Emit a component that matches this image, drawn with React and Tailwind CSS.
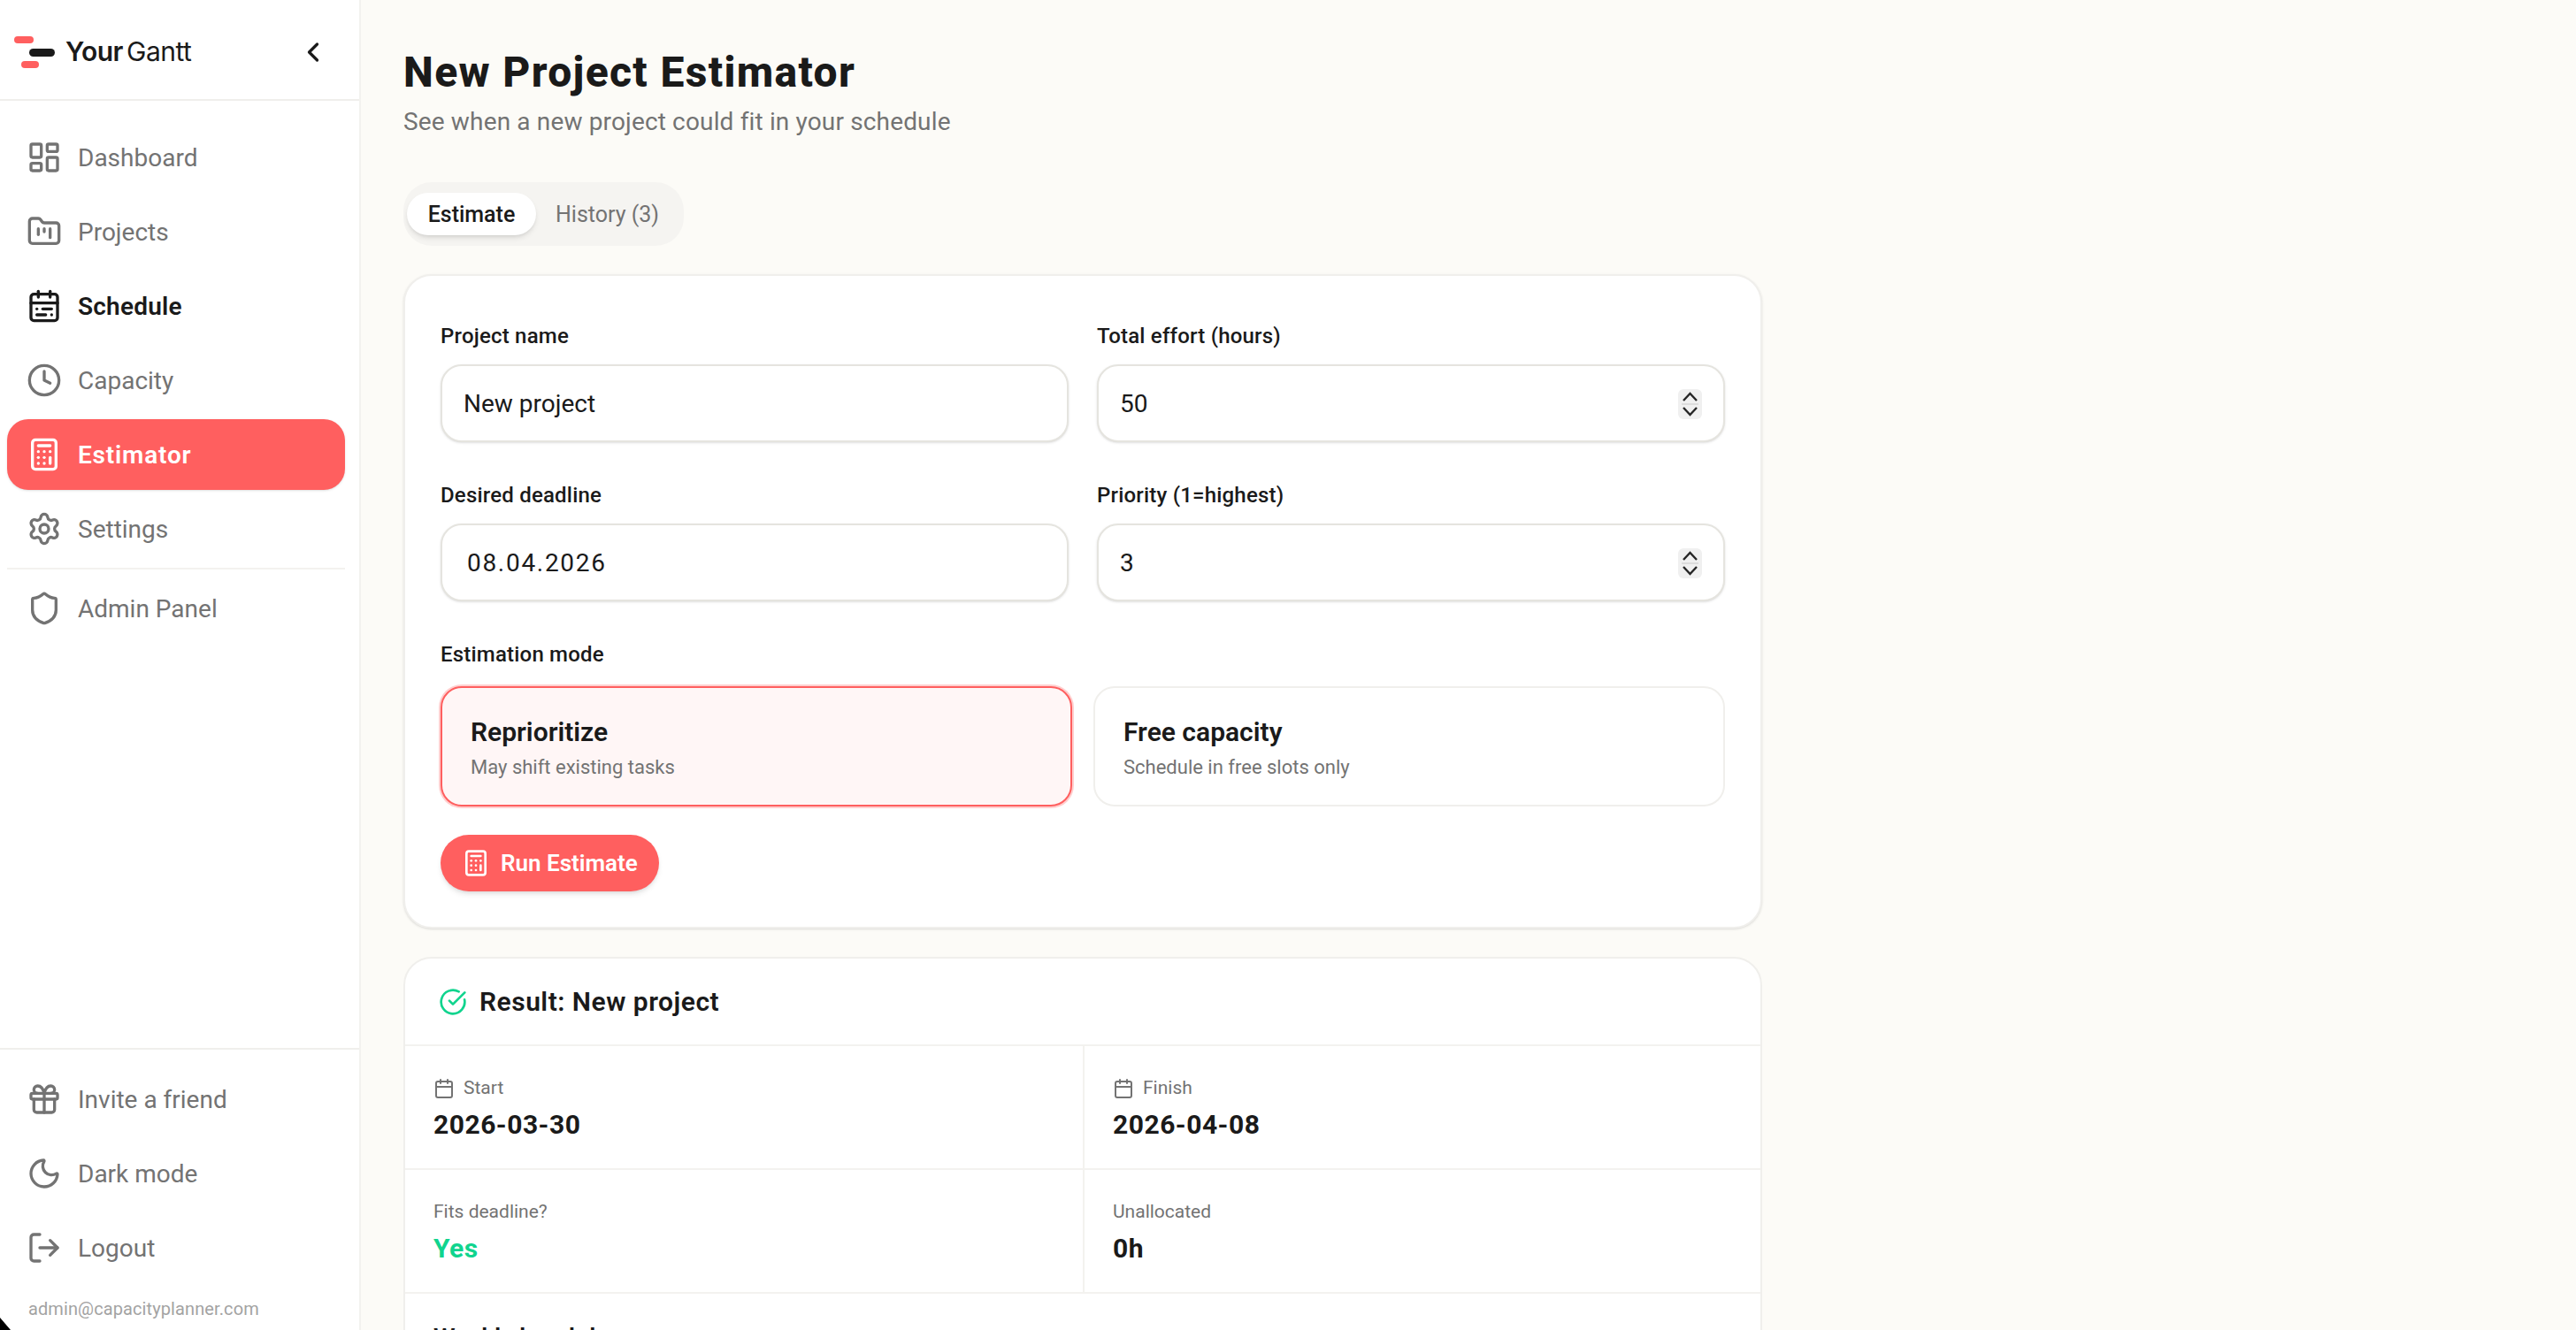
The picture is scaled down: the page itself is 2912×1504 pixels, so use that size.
import {
  LayoutDashboard,
  FolderKanban,
  CalendarRange,
  Clock,
  Calculator,
  Settings,
  Shield,
  Gift,
  Moon,
  LogOut,
  ChevronLeft,
  CircleCheckBig,
  Calendar,
} from "lucide-react";

const navItems = [
  { label: "Dashboard", icon: LayoutDashboard },
  { label: "Projects", icon: FolderKanban },
  { label: "Schedule", icon: CalendarRange, strong: true },
  { label: "Capacity", icon: Clock },
  { label: "Estimator", icon: Calculator, active: true },
  { label: "Settings", icon: Settings },
];

const footerItems = [
  { label: "Invite a friend", icon: Gift },
  { label: "Dark mode", icon: Moon },
  { label: "Logout", icon: LogOut },
];

const NavItem = ({ item }) => {
  const Icon = item.icon;
  let tone = "text-[#737373] font-normal";
  if (item.strong) tone = "text-[#1a1a1a] font-semibold tracking-[0.2px]";
  if (item.active) tone = "bg-[#ff5f5f] text-white font-semibold shadow-sm tracking-[0.8px]";
  return (
    <a className={`flex h-[80px] items-center gap-[18px] rounded-[24px] px-[22px] text-[28px] ${tone}`}>
      <Icon size={40} strokeWidth={2} className="shrink-0" />
      <span className="pt-[2px]">{item.label}</span>
    </a>
  );
};

const Spinner = () => (
  <svg width="27" height="34" viewBox="0 0 27 34" fill="none" className="shrink-0 rounded-[6px] bg-[#f0f0f0]">
    <path d="M6 13 L13.5 5 L21 13" stroke="#262626" strokeWidth="2.4" />
    <path d="M4 17 H23" stroke="#dcdcdc" strokeWidth="2" />
    <path d="M6 21 L13.5 29 L21 21" stroke="#262626" strokeWidth="2.4" />
  </svg>
);

const Field = ({ label, value, spinner, date }) => (
  <div>
    <label className="mb-[12px] block text-[24px] leading-[40px] font-medium tracking-[0.2px] text-[#1a1a1a]">
      {label}
    </label>
    <div className="flex h-[88px] items-center rounded-[24px] border-2 border-[#e5e4df] bg-white px-[24px] pt-[2px] shadow-sm">
      <input
        readOnly
        value={value}
        className={`w-full bg-transparent text-[28px] text-[#1a1a1a] outline-none ${date ? "pl-[4px] tracking-[1.7px]" : ""}`}
      />
      {spinner && <Spinner />}
    </div>
  </div>
);

const Stat = ({ label, icon, value, valueClass, divider }) => (
  <div className={`h-[140px] border-b-2 border-[#f3f2ef] pt-[32px] pl-[32px] ${divider ? "border-r-2" : ""}`}>
    <div className="flex h-[32px] items-center gap-[10px] text-[21px] text-[#737373]">
      {icon && <Calendar size={24} strokeWidth={2} />}
      <span>{label}</span>
    </div>
    <div className={`mt-[5px] text-[30px] leading-[40px] font-bold tracking-[0.5px] ${valueClass || "text-[#1a1a1a]"}`}>
      {value}
    </div>
  </div>
);

export default function App() {
  return (
    <div className="relative flex h-[1504px] w-full overflow-hidden bg-[#fcfbf7] font-[Roboto,sans-serif]">
      {/* Sidebar */}
      <aside className="flex w-[408px] shrink-0 flex-col border-r-2 border-[#f3f2ef] bg-white">
        <div className="flex h-[114px] shrink-0 items-center justify-between border-b-2 border-[#f0efec] pt-[5px] pr-[34px] pl-[16px]">
          <div className="flex items-center gap-[12px]">
            <svg width="46" height="36" viewBox="0 0 46 36" fill="none">
              <rect x="0" y="0" width="22" height="8" rx="4" fill="#ff5f5f" />
              <rect x="17" y="14" width="29" height="9" rx="4.5" fill="#1a1a1a" />
              <rect x="8" y="28" width="20" height="8" rx="4" fill="#ff5f5f" />
            </svg>
            <span className="font-[Inter,sans-serif] text-[30px] tracking-[-0.5px] text-[#1a1a1a]">
              <span className="font-semibold">Your</span>
              <span className="ml-[4px] font-normal">Gantt</span>
            </span>
          </div>
          <ChevronLeft size={36} strokeWidth={2.2} className="text-[#1a1a1a]" />
        </div>

        <nav className="flex flex-col gap-[4px] pt-[24px] pr-[16px] pl-[8px]">
          {navItems.map((item) => (
            <NavItem key={item.label} item={item} />
          ))}
          <div className="h-[2px] bg-[#f3f2ef]" />
          <NavItem item={{ label: "Admin Panel", icon: Shield }} />
        </nav>

        <div className="mt-auto flex flex-col gap-[4px] border-t-2 border-[#f0efec] pt-[16px] pr-[16px] pl-[8px]">
          {footerItems.map((item) => (
            <NavItem key={item.label} item={item} />
          ))}
          <div className="mt-[9px] mb-[8px] pl-[24px] text-[20px] leading-[32px] tracking-[0.1px] text-[#a3a3a3]">
            admin@capacityplanner.com
          </div>
        </div>
      </aside>

      {/* Main */}
      <main className="min-w-0 flex-1 overflow-hidden pt-[46px] pl-[48px]">
        <div className="w-[1536px]">
          <h1 className="text-[48px] leading-[72px] font-extrabold tracking-[1.35px] text-[#1a1a1a]">
            New Project Estimator
          </h1>
          <p className="text-[28px] leading-[40px] tracking-[0.15px] text-[#737373]">
            See when a new project could fit in your schedule
          </p>

          {/* Tabs */}
          <div className="mt-[48px] inline-flex h-[72px] items-center rounded-[32px] bg-[#f5f4f1] px-[4px] align-top">
            <button className="h-[48px] w-[146px] rounded-[24px] bg-white pt-[2px] text-[25px] font-medium text-[#1a1a1a] shadow-md">
              Estimate
            </button>
            <button className="ml-[22px] pt-[2px] pr-[24px] text-[25px] font-normal text-[#737373]">History (3)</button>
          </div>

          {/* Form card */}
          <section className="mt-[32px] rounded-[32px] border-2 border-[#f0efec] bg-white px-[40px] pt-[48px] pb-[40px] shadow-sm">
            <div className="grid grid-cols-2 gap-x-[32px] gap-y-[40px]">
              <Field label="Project name" value="New project" />
              <Field label="Total effort (hours)" value="50" spinner />
              <Field label="Desired deadline" value="08.04.2026" date />
              <Field label="Priority (1=highest)" value="3" spinner />
            </div>

            <div className="mt-[40px] text-[24px] leading-[40px] font-medium tracking-[0.2px] text-[#1a1a1a]">
              Estimation mode
            </div>
            <div className="mt-[16px] grid grid-cols-2 gap-[24px]">
              <button className="h-[136px] rounded-[24px] border-2 border-[#ff5f5f] bg-[#fff6f6] pt-[4px] pl-[32px] text-left ring-2 ring-[#ff5f5f]/30">
                <div className="text-[30px] leading-[40px] font-semibold text-[#1a1a1a]">Reprioritize</div>
                <div className="mt-[4px] text-[22px] leading-[32px] text-[#737373]">May shift existing tasks</div>
              </button>
              <button className="h-[136px] rounded-[24px] border-2 border-[#f0efec] bg-white pt-[4px] pl-[32px] text-left">
                <div className="text-[30px] leading-[40px] font-semibold text-[#1a1a1a]">Free capacity</div>
                <div className="mt-[4px] text-[22px] leading-[32px] text-[#737373]">Schedule in free slots only</div>
              </button>
            </div>

            <button className="mt-[32px] flex h-[64px] items-center gap-[12px] rounded-full bg-[#ff5f5f] pr-[24px] pl-[24px] text-[26px] font-semibold text-white shadow-md">
              <Calculator size={32} strokeWidth={2} />
              <span className="pt-[1px]">Run Estimate</span>
            </button>
          </section>

          {/* Result card */}
          <section className="mt-[32px] rounded-t-[32px] border-2 border-[#f0efec] bg-white">
            <div className="flex h-[99px] items-center gap-[14px] border-b-2 border-[#f3f2ef] pl-[38px]">
              <CircleCheckBig size={32} strokeWidth={2} className="text-[#10d48e]" />
              <span className="text-[30px] font-semibold tracking-[0.5px] text-[#1a1a1a]">Result: New project</span>
            </div>
            <div className="grid grid-cols-[768px_1fr]">
              <Stat label="Start" icon value="2026-03-30" divider />
              <Stat label="Finish" icon value="2026-04-08" />
              <Stat label="Fits deadline?" value="Yes" valueClass="text-[#10d48e]" divider />
              <Stat label="Unallocated" value="0h" />
            </div>
            <div className="pt-[30px] pl-[32px] text-[28px] leading-[40px] font-semibold text-[#1a1a1a]">
              Weekly breakdown
            </div>
          </section>
        </div>
      </main>

      {/* window corner */}
      <svg className="absolute bottom-0 left-0" width="12" height="14" viewBox="0 0 12 14">
        <path d="M0 0 L12 14 L0 14 Z" fill="#000" />
      </svg>
    </div>
  );
}
